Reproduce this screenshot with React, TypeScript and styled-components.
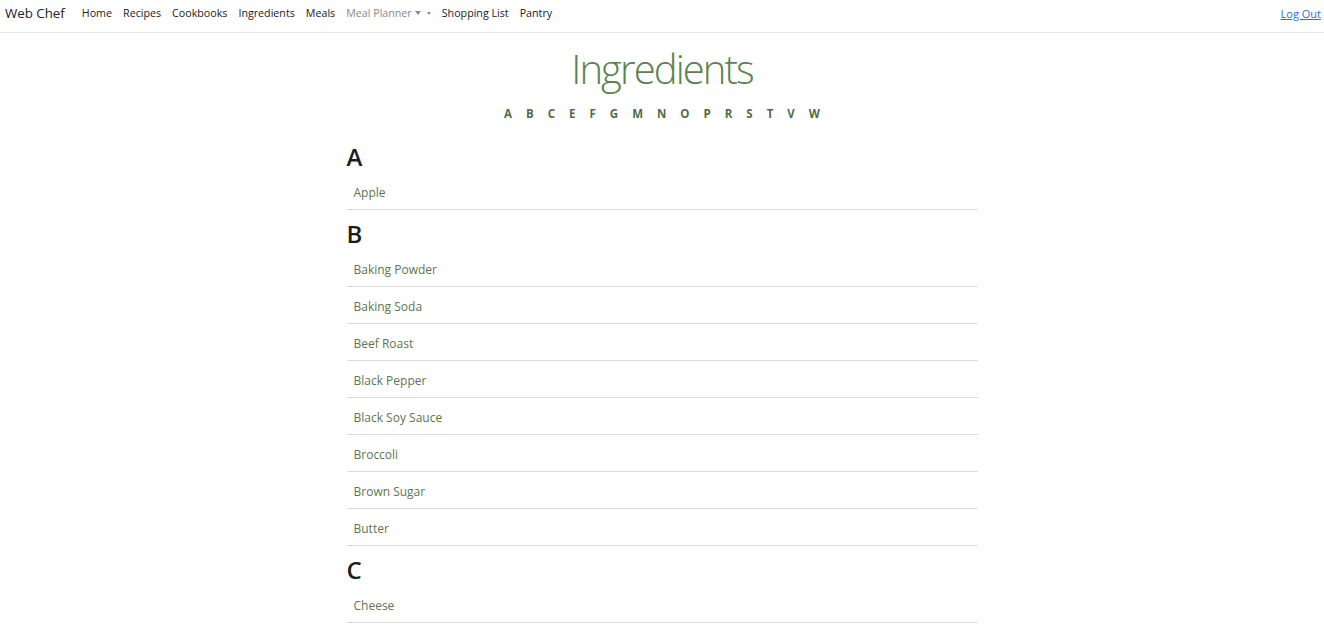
import React from "react";
import styled, { createGlobalStyle } from "styled-components";

const Global = createGlobalStyle`
  html, body { margin: 0; padding: 0; background: #fff; overflow: hidden; }
  body { font-family: "Open Sans", "Noto Sans", sans-serif; color: #212529; }
  * { box-sizing: border-box; }
`;

const Nav = styled.nav`
  display: flex;
  align-items: center;
  height: 33px;
  border-bottom: 1px solid #e5e5e5;
  padding: 0 3px 6px 5px;
`;

const Brand = styled.a`
  font-size: 13.3px;
  color: #222;
  margin-right: 17px;
  text-decoration: none;
  white-space: nowrap;
`;

const NavList = styled.div`
  display: flex;
  align-items: center;
  gap: 11px;
  flex: 1;
`;

const NavLink = styled.a<{ $muted?: boolean }>`
  font-size: 10.7px;
  color: ${(p) => (p.$muted ? "#8a8a8a" : "#222")};
  text-decoration: none;
  white-space: nowrap;
  display: flex;
  align-items: center;
`;

const Caret = styled.span<{ $small?: boolean }>`
  display: inline-block;
  width: 0;
  height: 0;
  border-left: ${(p) => (p.$small ? 2.5 : 3.5)}px solid transparent;
  border-right: ${(p) => (p.$small ? 2.5 : 3.5)}px solid transparent;
  border-top: ${(p) => (p.$small ? 3 : 4)}px solid #8a8a8a;
  margin-left: ${(p) => (p.$small ? 6 : 3)}px;
`;

const LogOut = styled.a`
  font-size: 11px;
  color: #2a6fd6;
  text-decoration: underline;
`;

const Main = styled.main`
  width: 631px;
  margin: 0 auto;
  display: flex;
  flex-direction: column;
`;

const Title = styled.h1`
  margin: 10px 0 0;
  text-align: center;
  font-weight: 300;
  font-size: 40px;
  letter-spacing: -1.9px;
  line-height: 52px;
  color: #5a834e;
`;

const Letters = styled.div`
  display: flex;
  justify-content: center;
  margin: 11px 0 11px;
`;

const Letter = styled.a`
  font-size: 11.5px;
  line-height: 16px;
  font-weight: 700;
  color: #4f6e45;
  padding: 0 7px;
  text-decoration: none;
`;

const Section = styled.section`
  display: flex;
  flex-direction: column;
`;

const Heading = styled.h2`
  margin: 0;
  font-size: 24px;
  font-weight: 600;
  color: #1d1d1d;
  line-height: 32px;
  padding-top: 8px;
`;

const Item = styled.a`
  display: block;
  padding: 10px 7px 7px;
  font-size: 12px;
  line-height: 19px;
  color: #5d7553;
  border-bottom: 1px solid #dadada;
  text-decoration: none;
`;

const data: [string, string[]][] = [
  ["A", ["Apple"]],
  [
    "B",
    [
      "Baking Powder",
      "Baking Soda",
      "Beef Roast",
      "Black Pepper",
      "Black Soy Sauce",
      "Broccoli",
      "Brown Sugar",
      "Butter",
    ],
  ],
  ["C", ["Cheese"]],
];

const letters = "A B C E F G M N O P R S T V W".split(" ");

export default function App() {
  return (
    <>
      <Global />
      <Nav>
        <Brand href="#">Web Chef</Brand>
        <NavList>
          <NavLink href="#">Home</NavLink>
          <NavLink href="#">Recipes</NavLink>
          <NavLink href="#">Cookbooks</NavLink>
          <NavLink href="#">Ingredients</NavLink>
          <NavLink href="#">Meals</NavLink>
          <NavLink href="#" $muted>
            Meal Planner
            <Caret />
            <Caret $small />
          </NavLink>
          <NavLink href="#">Shopping List</NavLink>
          <NavLink href="#">Pantry</NavLink>
        </NavList>
        <LogOut href="#">Log Out</LogOut>
      </Nav>
      <Main>
        <Title>Ingredients</Title>
        <Letters>
          {letters.map((l) => (
            <Letter key={l} href="#">
              {l}
            </Letter>
          ))}
        </Letters>
        {data.map(([h, items]) => (
          <Section key={h}>
            <Heading>{h}</Heading>
            {items.map((i) => (
              <Item key={i} href="#">
                {i}
              </Item>
            ))}
          </Section>
        ))}
      </Main>
    </>
  );
}
